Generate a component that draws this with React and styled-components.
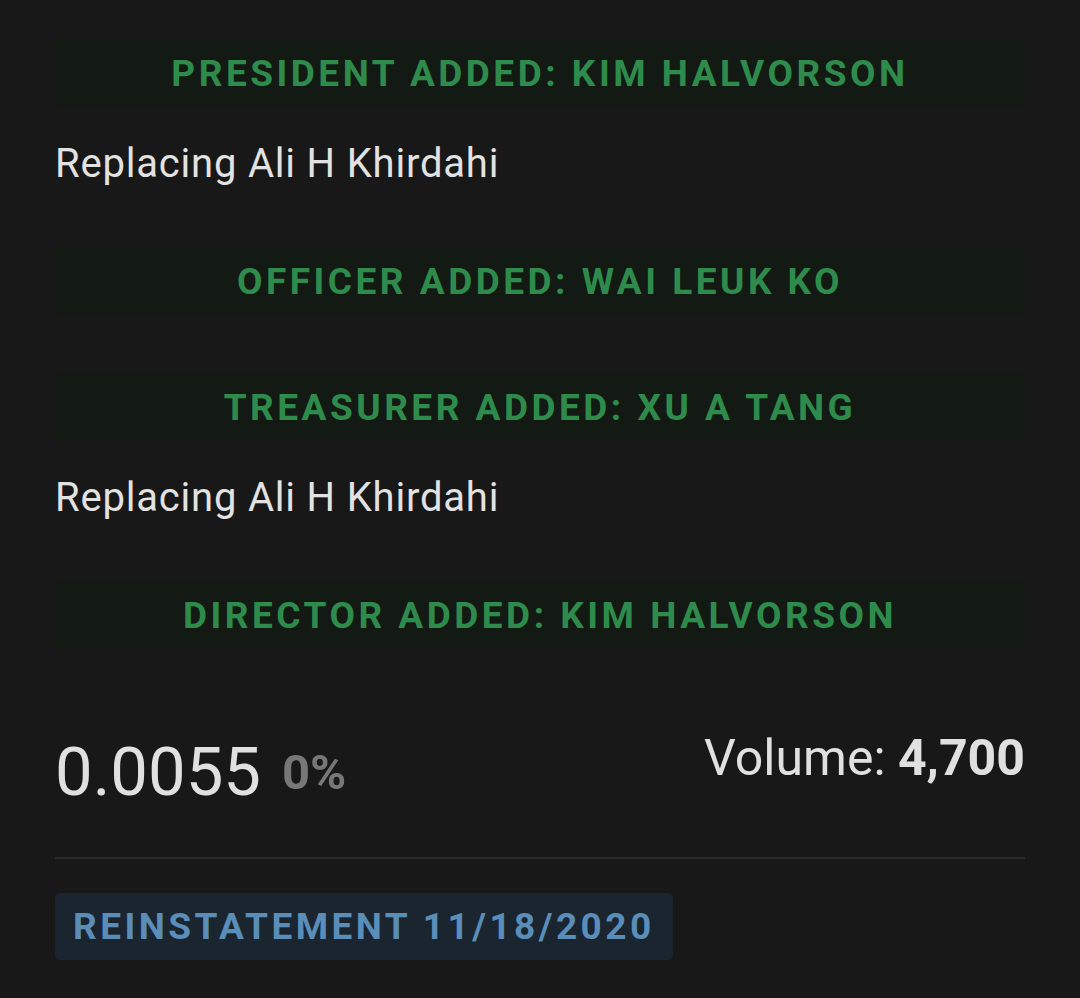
import React from "react";
import styled, { createGlobalStyle } from "styled-components";

const Global = createGlobalStyle`
  html, body { margin: 0; padding: 0; background: #181818; }
  body { font-family: Roboto, "Noto Sans", sans-serif; }
`;

const Page = styled.div`
  width: 1080px;
  min-height: 998px;
  box-sizing: border-box;
  padding: 40px 55px 0 55px;
  background: #181818;
  display: flex;
  flex-direction: column;
`;

const Entries = styled.div`
  display: flex;
  flex-direction: column;
  gap: 60px;
`;

const Entry = styled.div`
  display: flex;
  flex-direction: column;
`;

const Banner = styled.div`
  height: 66px;
  border-radius: 4px;
  background: #131a13;
  color: #2e8b4c;
  font-weight: 700;
  font-size: 37px;
  letter-spacing: 3.5px;
  display: flex;
  align-items: center;
  justify-content: center;
  text-transform: uppercase;
`;

const Note = styled.div`
  margin-top: 34px;
  font-size: 40px;
  letter-spacing: 0.8px;
  line-height: 48px;
  color: #e2e2e2;
`;

const Stats = styled.div`
  margin-top: 85px;
  display: flex;
  justify-content: space-between;
  align-items: flex-start;
`;

const Price = styled.div`
  font-size: 67px;
  color: #e0e0e0;
`;

const Change = styled.span`
  font-size: 49px;
  font-weight: 700;
  color: #777777;
  margin-left: 21px;
  vertical-align: 6px;
`;

const Volume = styled.div`
  font-size: 50px;
  line-height: 1;
  color: #e0e0e0;
`;

const VolumeValue = styled.b`
  font-weight: 700;
`;

const Divider = styled.hr`
  margin: 46px 0 0 0;
  border: none;
  height: 2px;
  background: #2a2a2a;
`;

const Badge = styled.div`
  align-self: flex-start;
  margin-top: 34px;
  height: 67px;
  padding: 0 18px;
  border-radius: 5px;
  background: #1a2530;
  color: #5a8db8;
  font-weight: 700;
  font-size: 37px;
  letter-spacing: 3.45px;
  display: flex;
  align-items: center;
  text-transform: uppercase;
`;

const entries = [
  { title: "President Added: Kim Halvorson", note: "Replacing Ali H Khirdahi" },
  { title: "Officer Added: Wai Leuk Ko" },
  { title: "Treasurer Added: Xu A Tang", note: "Replacing Ali H Khirdahi" },
  { title: "Director Added: Kim Halvorson" },
];

export default function App() {
  return (
    <>
      <Global />
      <Page>
        <Entries>
          {entries.map((e) => (
            <Entry key={e.title}>
              <Banner>{e.title}</Banner>
              {e.note && <Note>{e.note}</Note>}
            </Entry>
          ))}
        </Entries>
        <Stats>
          <Price>
            0.0055<Change>0%</Change>
          </Price>
          <Volume>
            Volume: <VolumeValue>4,700</VolumeValue>
          </Volume>
        </Stats>
        <Divider />
        <Badge>Reinstatement 11/18/2020</Badge>
      </Page>
    </>
  );
}
